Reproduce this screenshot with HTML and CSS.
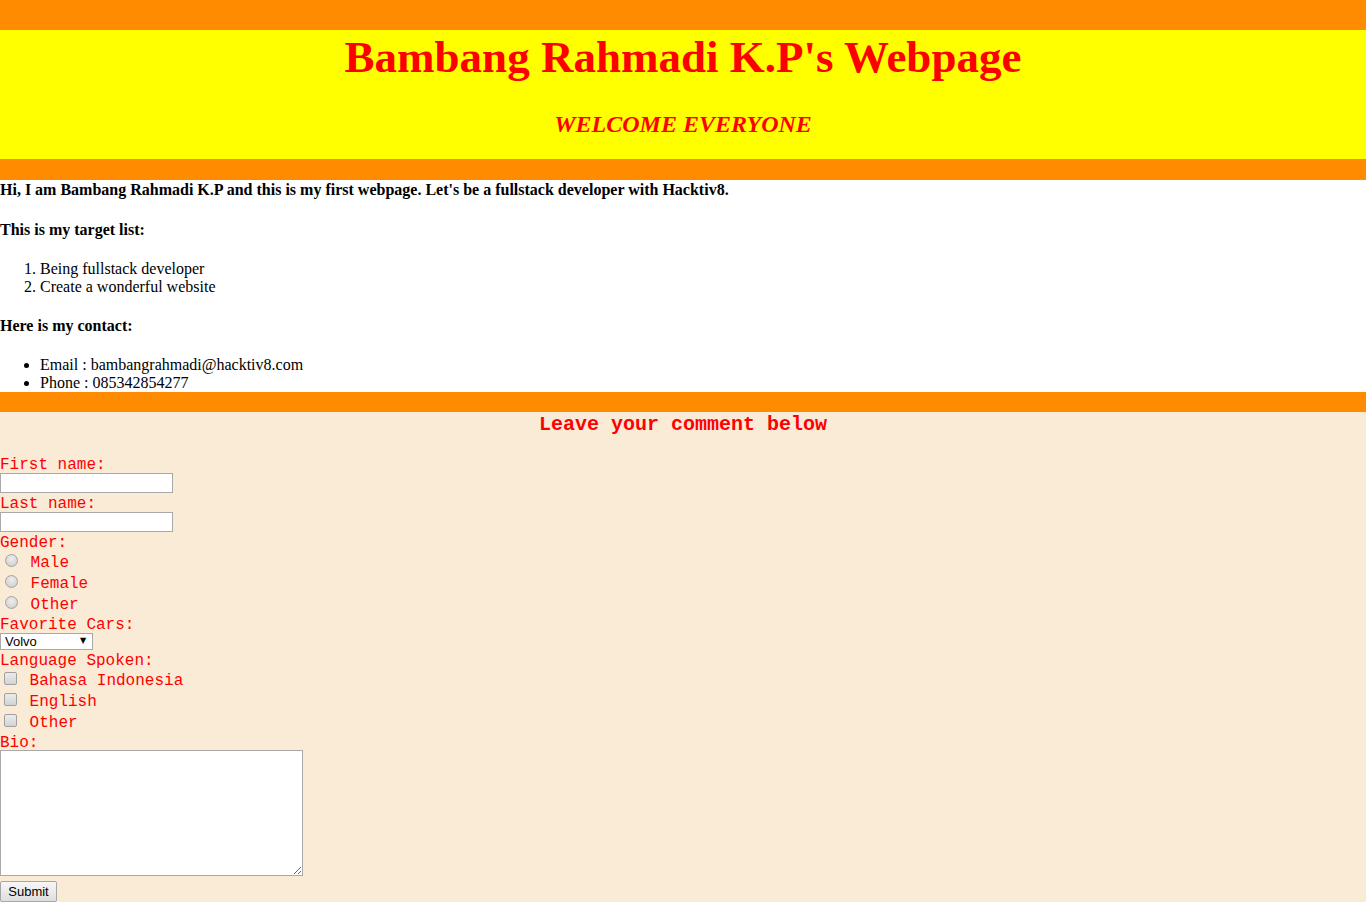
FILE: index.html
```html
<!DOCTYPE html>
<html>
<head>
<meta charset="utf-8">
<title>Bambang Rahmadi K.P's Webpage</title>
<link rel="stylesheet" href="styles.css">
</head>
<body>
<div class="bar bar-top"></div>
<header class="hero">
  <h1 class="hero-title">Bambang Rahmadi K.P's Webpage</h1>
  <h2 class="hero-sub">WELCOME EVERYONE</h2>
</header>
<div class="bar bar-mid"></div>
<main class="intro">
  <h4 class="intro-head intro-first">Hi, I am Bambang Rahmadi K.P and this is my first webpage. Let's be a fullstack developer with Hacktiv8.</h4>
  <h4 class="intro-head intro-target">This is my target list:</h4>
  <ol class="intro-list intro-ol">
    <li>Being fullstack developer</li>
    <li>Create a wonderful website</li>
  </ol>
  <h4 class="intro-head intro-contact">Here is my contact:</h4>
  <ul class="intro-list">
    <li>Email : bambangrahmadi@hacktiv8.com</li>
    <li>Phone : 085342854277</li>
  </ul>
</main>
<div class="bar bar-low"></div>
<form class="comment">
  <h3 class="comment-title">Leave your comment below</h3>
  <label class="field-label label-19">First name:</label>
  <input class="text-input" type="text">
  <label class="field-label label-19">Last name:</label>
  <input class="text-input" type="text">
  <label class="field-label label-19">Gender:</label>
  <label class="choice"><input class="radio" type="radio" name="gender"> Male</label>
  <label class="choice"><input class="radio" type="radio" name="gender"> Female</label>
  <label class="choice"><input class="radio" type="radio" name="gender"> Other</label>
  <label class="field-label label-18">Favorite Cars:</label>
  <span class="select-wrap">
    <select class="select">
      <option>Volvo</option>
      <option>Saab</option>
      <option>Fiat</option>
      <option>Audi</option>
    </select>
    <span class="select-arrow">&#9660;</span>
  </span>
  <label class="field-label label-19">Language Spoken:</label>
  <label class="choice choice-check"><input class="check" type="checkbox"> Bahasa Indonesia</label>
  <label class="choice choice-check"><input class="check" type="checkbox"> English</label>
  <label class="choice choice-check"><input class="check" type="checkbox"> Other</label>
  <label class="field-label label-18">Bio:</label>
  <textarea class="bio"></textarea>
  <input class="submit" type="submit" value="Submit">
</form>
</body>
</html>
```
FILE: styles.css
```css
html, body {
  margin: 0;
  padding: 0;
}
body {
  font-family: "Liberation Serif", "Times New Roman", serif;
  background: #faebd7;
  color: #000;
}
.bar {
  background: #ff8c00;
}
.bar-top { height: 30px; }
.bar-mid { height: 21px; }
.bar-low { height: 20px; }

.hero {
  background: #ffff00;
  height: 129px;
  text-align: center;
  color: #ff0000;
  overflow: hidden;
}
.hero-title {
  margin: 0;
  padding-top: 1px;
  font-size: 45px;
  line-height: 52px;
  font-weight: bold;
  letter-spacing: 0;
}
.hero-sub {
  margin: 27px 0 0;
  font-size: 24px;
  line-height: 28px;
  font-style: italic;
  font-weight: bold;
}

.intro {
  background: #ffffff;
  font-size: 16px;
  line-height: 18.4px;
  padding-top: 1px;
  box-sizing: border-box;
  height: 212px;
}
.intro-head {
  margin: 21px 0 0;
  font-size: 16px;
  font-weight: bold;
}
.intro-first {
  margin-top: 0;
}
.intro-target {
  margin-top: 22px;
}
.intro-contact {
  margin-top: 20px;
}
.intro-list {
  margin: 21px 0 0;
  padding-left: 40px;
}
.intro-ol {
  margin-top: 20px;
}

.comment {
  display: flex;
  flex-direction: column;
  align-items: flex-start;
  font-family: "Liberation Mono", "Courier New", monospace;
  color: #ff0000;
  font-size: 16px;
  padding-bottom: 10px;
}
.comment-title {
  align-self: stretch;
  box-sizing: border-box;
  height: 23px;
  padding-top: 1px;
  margin: 0 0 19px;
  text-align: center;
  font-size: 20px;
  line-height: 23px;
  font-weight: bold;
}
.field-label {
  display: block;
  box-sizing: border-box;
  padding-top: 2px;
  line-height: 19px;
  height: 19px;
}
.label-18 {
  height: 18px;
  line-height: 18px;
}
.text-input {
  box-sizing: border-box;
  width: 173px;
  height: 20px;
  margin: 0;
  border: 1px solid #a9a9a9;
  background: #fff;
  padding: 1px 2px;
}
.choice {
  display: flex;
  align-items: center;
  box-sizing: border-box;
  height: 21px;
  padding-top: 3px;
  line-height: 18px;
  white-space: pre;
}
.radio {
  appearance: none;
  -webkit-appearance: none;
  box-sizing: border-box;
  width: 13px;
  height: 13px;
  margin: -5px 3px 0 5px;
  border-radius: 50%;
  border: 1px solid #a3a3a3;
  background: radial-gradient(circle at 50% 35%, #eeeeee 0%, #d8d8d8 60%, #c8c8c8 100%);
}
.check {
  appearance: none;
  -webkit-appearance: none;
  box-sizing: border-box;
  width: 13px;
  height: 13px;
  margin: -5px 3px 0 4px;
  border-radius: 2px;
  border: 1px solid #a0a0a0;
  background: linear-gradient(#ececec, #d3d3d3);
}
.select-wrap {
  position: relative;
  display: block;
  height: 18px;
  padding-top: 1px;
  box-sizing: border-box;
}
.select {
  appearance: none;
  -webkit-appearance: none;
  box-sizing: border-box;
  width: 93px;
  height: 17px;
  margin: 0;
  border: 1px solid #a9a9a9;
  border-radius: 0;
  background: #fff;
  color: #000;
  font-family: "Liberation Sans", Arial, sans-serif;
  font-size: 13px;
  line-height: 15px;
  padding: 0 0 0 4px;
}
.select-arrow {
  position: absolute;
  left: 80px;
  top: 4px;
  font-size: 8px;
  line-height: 9px;
  color: #000;
  pointer-events: none;
  font-family: "DejaVu Sans", sans-serif;
}
.bio {
  box-sizing: border-box;
  width: 303px;
  height: 126px;
  margin: 0;
  border: 1px solid #a9a9a9;
  background: #fff;
  resize: both;
}
.submit {
  box-sizing: border-box;
  margin: 5px 0 0;
  width: 57px;
  height: 21px;
  padding: 0;
  border: 1px solid #a6a6a6;
  border-radius: 2px;
  background: linear-gradient(#f7f7f7, #dedede);
  font-family: "Liberation Sans", Arial, sans-serif;
  font-size: 13px;
  color: #000;
}
```
